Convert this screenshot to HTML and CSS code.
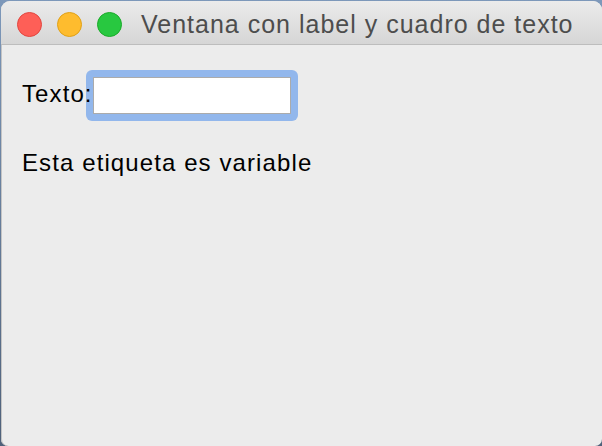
FILE: index.html
```html
<!DOCTYPE html>
<html lang="es">
<head>
<meta charset="utf-8">
<link rel="stylesheet" href="styles.css">
</head>
<body>
<div class="window">
  <div class="titlebar">
    <div class="lights">
      <span class="light red"></span>
      <span class="light yellow"></span>
      <span class="light green"></span>
    </div>
    <div class="title">Ventana con label y cuadro de texto</div>
  </div>
  <div class="content">
    <div class="row">
      <span class="label">Texto:</span>
      <span class="ring"><input class="field" type="text"></span>
    </div>
    <div class="var">Esta etiqueta es variable</div>
  </div>
</div>
</body>
</html>
```
FILE: styles.css
```css
html, body {
  margin: 0;
  padding: 0;
}
body {
  width: 602px;
  height: 446px;
  background: linear-gradient(#7d98ba, #4f617a);
  overflow: hidden;
  font-family: "Liberation Sans", Arial, sans-serif;
}
.window {
  margin: 1px 0 0 1px;
  width: 601px;
  height: 445px;
  border-radius: 9px 9px 7px 7px;
  overflow: hidden;
  background: #ececec;
  display: flex;
  flex-direction: column;
  box-shadow: inset 1px 0 0 #c4c4c4;
}
.titlebar {
  height: 43px;
  flex: none;
  display: flex;
  align-items: flex-start;
  background: linear-gradient(#ebebeb, #d6d6d6);
  border-bottom: 1px solid #bdbdbd;
  padding-left: 16px;
}
.lights {
  display: flex;
  gap: 15px;
  margin-top: 11px;
}
.light {
  width: 25px;
  height: 25px;
  border-radius: 50%;
  box-sizing: border-box;
  display: block;
}
.red { background: #fe5f57; border: 1px solid #e2463f; }
.yellow { background: #febc2e; border: 1px solid #e1a116; }
.green { background: #28c840; border: 1px solid #1aab29; }
.title {
  margin: 8px 0 0 19px;
  font-size: 25px;
  line-height: 30px;
  letter-spacing: 1px;
  color: #4d4d4d;
  white-space: nowrap;
}
.content {
  padding: 25px 0 0 21px;
}
.row {
  display: flex;
  align-items: flex-start;
}
.label {
  position: relative;
  z-index: 1;
  flex: none;
  width: 64px;
  margin-top: 10px;
  font-size: 24px;
  line-height: 28px;
  letter-spacing: 1.1px;
  white-space: nowrap;
  color: #000;
}
.ring {
  display: block;
  flex: none;
  width: 212px;
  height: 51px;
  box-sizing: border-box;
  border-radius: 6px;
  background: #92b7ec;
  padding: 7px;
}
.field {
  display: block;
  width: 198px;
  height: 37px;
  box-sizing: border-box;
  margin: 0;
  border: 1px solid #ababab;
  background: #fff;
  outline: none;
  padding: 0;
}
.var {
  margin-top: 28px;
  font-size: 24px;
  line-height: 28px;
  letter-spacing: 1.1px;
  color: #000;
}
```
